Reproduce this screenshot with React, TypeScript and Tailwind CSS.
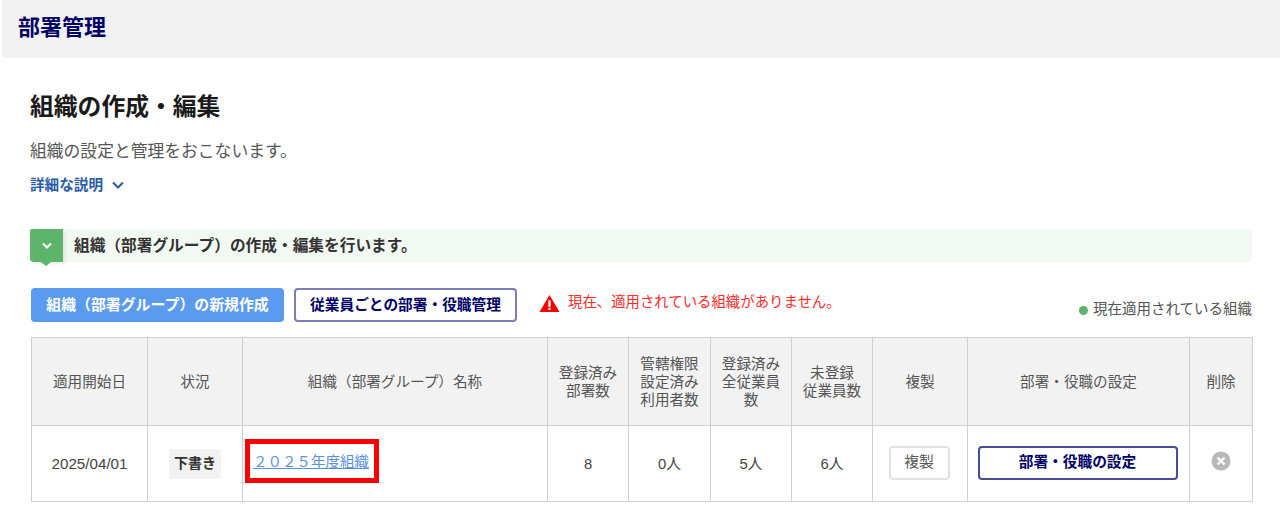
import React from "react";

const th = "border border-[#cfcfcf] bg-[#f2f2f2] font-normal text-[14.6px] leading-[18px] text-[#555] text-center align-middle p-0";
const td = "border border-[#cfcfcf] text-[14.8px] text-[#444] text-center align-middle p-0";
const tdn = td + " pt-[1px]";

export default function App() {
  return (
    <div className="w-[1280px] h-[510px] overflow-hidden bg-white pl-[2px] text-[#333] font-['Liberation_Sans','Noto_Sans_CJK_JP',sans-serif]">
      <header className="h-[58px] bg-[#f2f2f2] flex items-center pl-[16px]">
        <h1 className="text-[22px] leading-[30px] font-bold text-[#000066] mt-[-3px]">部署管理</h1>
      </header>
      <main className="pl-[28px] pr-[28px]">
        <h2 className="mt-[33px] text-[23.8px] leading-[32px] font-bold text-[#1a1a1a]">組織の作成・編集</h2>
        <p className="mt-[17px] text-[16.8px] leading-[24px] text-[#555]">組織の設定と管理をおこないます。</p>
        <button className="mt-[10px] flex items-center gap-[9px] text-[14.6px] leading-[22px] font-bold text-[#2a5caa]">
          詳細な説明
          <svg width="12" height="8" viewBox="0 0 12 8" fill="none" stroke="#2a5caa" strokeWidth="2"><path d="M1 1.5l5 5 5-5" /></svg>
        </button>
        <div className="relative mt-[33px] h-[33px] rounded-[4px] bg-[#f2f9f3] flex items-center">
          <div className="relative w-[33px] h-[33px] bg-[#5cb56b] rounded-bl-[4px] rounded-tl-[2px] flex items-center justify-center shadow-[2px_2px_4px_rgba(0,0,0,0.08)]">
            <svg width="10" height="7" viewBox="0 0 10 7" fill="none" stroke="#fff" strokeWidth="2"><path d="M1 1.5l4 4 4-4" /></svg>
            <span className="absolute left-[11px] top-[33px] w-0 h-0 border-x-[5px] border-x-transparent border-t-[4px] border-t-[#5cb56b]" />
          </div>
          <p className="ml-[11px] text-[15.7px] font-bold text-[#333]">組織（部署グループ）の作成・編集を行います。</p>
        </div>
        <div className="mt-[25px] ml-[1px] h-[36px] flex items-center relative">
          <button className="w-[253px] h-[34px] rounded-[4px] bg-[#5a9bf0] text-white text-[14.9px] font-bold">組織（部署グループ）の新規作成</button>
          <button className="ml-[10px] w-[223px] h-[34px] rounded-[4px] border-2 border-[#7d7db8] bg-white text-[#000066] text-[14.7px] font-bold">従業員ごとの部署・役職管理</button>
          <svg className="ml-[22px] mt-[-4px]" width="21" height="19" viewBox="0 0 22 19">
            <path d="M11 0.5L21.5 18.5H0.5Z" fill="#ff0000" />
            <rect x="9.8" y="6" width="2.4" height="7" fill="#fff" />
            <rect x="9.8" y="14" width="2.4" height="2.4" fill="#fff" />
          </svg>
          <p className="ml-[8px] text-[14.4px] text-[#ff2a2a] mt-[-5px]">現在、適用されている組織がありません。</p>
          <p className="ml-auto mt-[10px] flex items-center gap-[5px] text-[14.5px] text-[#555]">
            <span className="w-[9px] h-[9px] rounded-full bg-[#5cb56b]" />
            現在適用されている組織
          </p>
        </div>
        <table className="mt-[14px] ml-[1px] w-[1221px] table-fixed border-collapse">
          <colgroup>
            <col className="w-[116px]" /><col className="w-[95px]" /><col className="w-[305px]" /><col className="w-[81px]" /><col className="w-[82px]" /><col className="w-[81px]" /><col className="w-[81px]" /><col className="w-[95px]" /><col className="w-[222px]" /><col className="w-[63px]" />
          </colgroup>
          <thead>
            <tr className="h-[88px]">
              <th className={th}>適用開始日</th>
              <th className={th}>状況</th>
              <th className={th}>組織（部署グループ）名称</th>
              <th className={th}>登録済み<br />部署数</th>
              <th className={th}>管轄権限<br />設定済み<br />利用者数</th>
              <th className={th}>登録済み<br />全従業員<br />数</th>
              <th className={th}>未登録<br />従業員数</th>
              <th className={th}>複製</th>
              <th className={th}>部署・役職の設定</th>
              <th className={th}>削除</th>
            </tr>
          </thead>
          <tbody>
            <tr className="h-[76px]">
              <td className={tdn + " text-[15.2px]"}>2025/04/01</td>
              <td className={td}>
                <span className="inline-block w-[52px] h-[30px] leading-[28px] rounded-[4px] bg-[#f2f2f2] font-bold text-[14px] text-[#333]">下書き</span>
              </td>
              <td className={td + " text-left"}>
                <span className="ml-[2px] mb-[6px] inline-flex items-center w-[134px] h-[44px] border-[5px] border-[#ff0000] pl-[3px]">
                  <a className="mt-[5px] text-[14.5px] text-[#5a90e0] underline">２０２５年度組織</a>
                </span>
              </td>
              <td className={tdn}>8</td>
              <td className={tdn}>0人</td>
              <td className={tdn}>5人</td>
              <td className={tdn}>6人</td>
              <td className={td}>
                <button className="mb-[2px] mr-[2px] w-[61px] h-[34px] rounded-[4px] border-2 border-[#e2e2e2] bg-white text-[14.8px] text-[#555]">複製</button>
              </td>
              <td className={td}>
                <button className="mb-[2px] mr-[2px] w-[200px] h-[34px] rounded-[4px] border-2 border-[#4a4a9c] bg-white text-[14.7px] font-bold text-[#000066]">部署・役職の設定</button>
              </td>
              <td className={td}>
                <svg className="mx-auto mt-[-5px]" width="20" height="20" viewBox="0 0 20 20">
                  <circle cx="10" cy="10" r="9.5" fill="#b8b8b8" />
                  <path d="M6.5 6.5l7 7M13.5 6.5l-7 7" stroke="#fff" strokeWidth="2.4" />
                </svg>
              </td>
            </tr>
          </tbody>
        </table>
      </main>
    </div>
  );
}
